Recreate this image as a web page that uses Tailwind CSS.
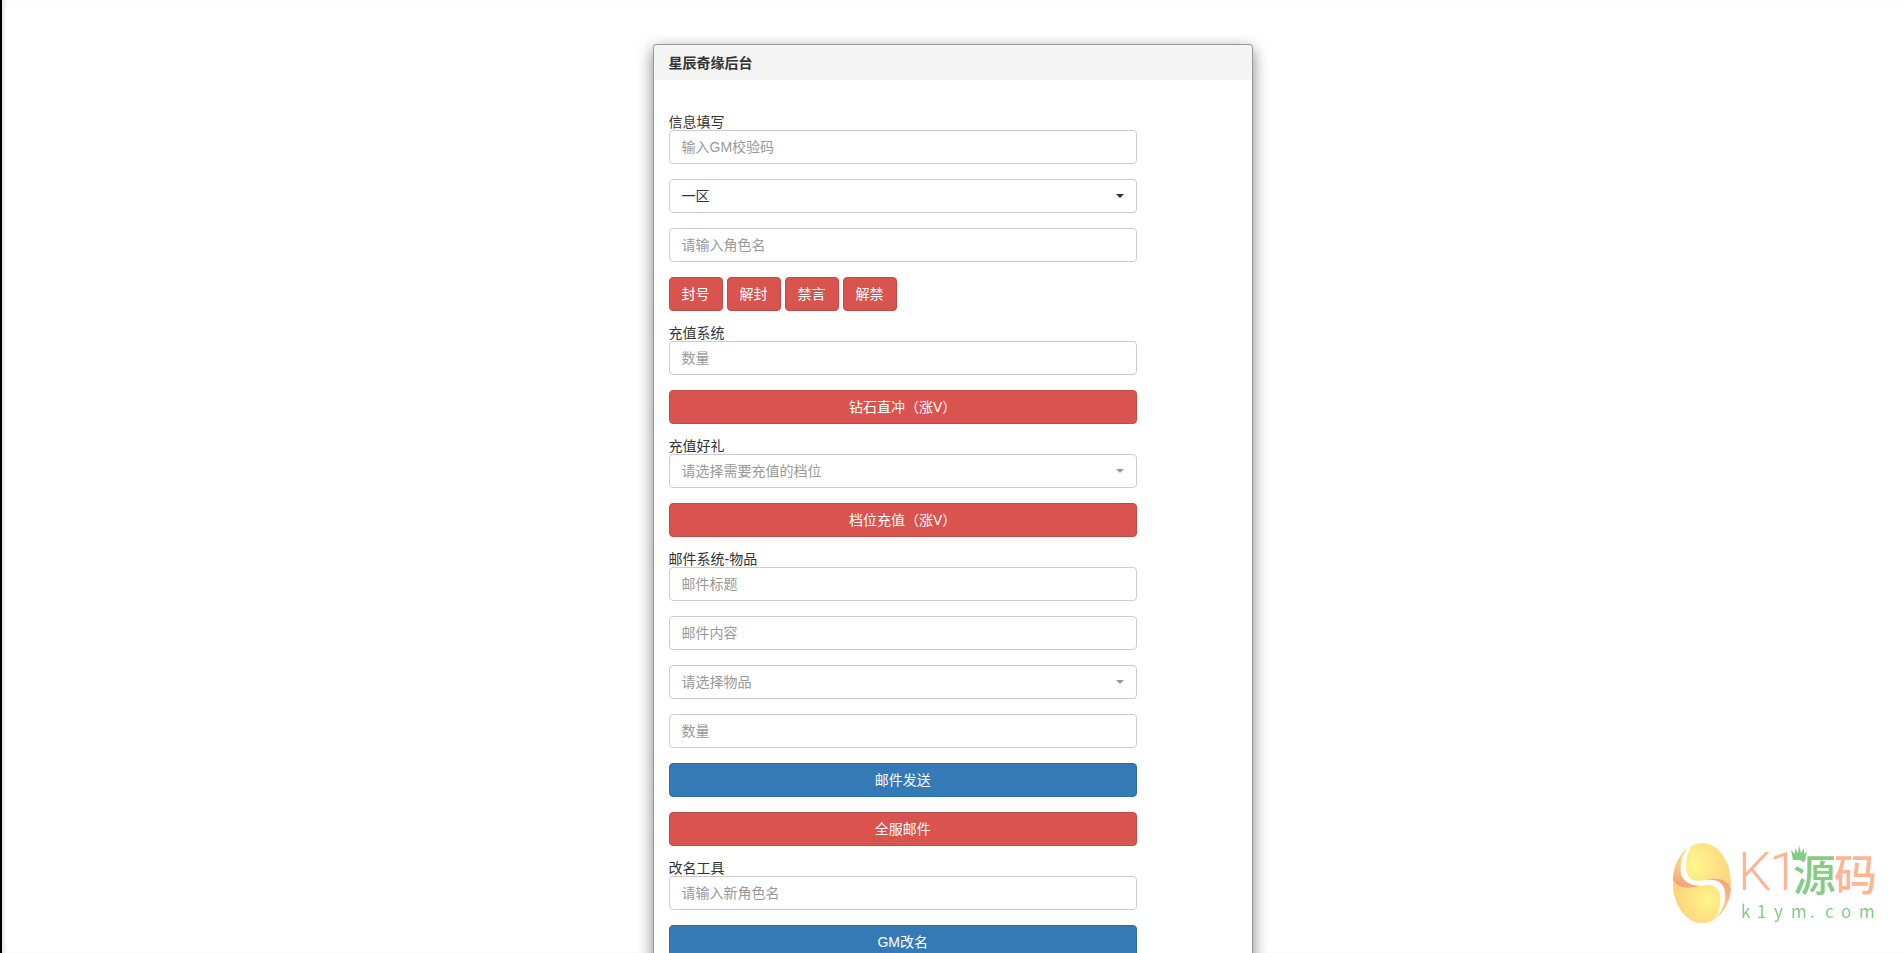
<!DOCTYPE html>
<html lang="zh-CN">
<head>
    <meta charset="UTF-8">
    <meta name="viewport" content="width=device-width, initial-scale=1.0">
    <title>星辰奇缘后台</title>
    <script src="https://cdn.jsdelivr.net/npm/@tailwindcss/browser@4"></script>
</head>
<body class="h-screen overflow-hidden bg-white border-l-2 border-black text-sm text-[#333] font-['Liberation_Sans','Noto_Sans_CJK_SC',sans-serif] shadow-[inset_4px_0_4px_-2px_rgba(0,0,0,0.12)]">

<main class="w-full max-w-[600px] mx-auto mt-11 pb-4 bg-white border border-black/40 rounded shadow-[0_5px_15px_rgba(0,0,0,0.5)]">
    <h1 class="h-[35px] px-[15px] leading-9 font-bold bg-[#f4f4f4] rounded-t">星辰奇缘后台</h1>

    <form class="w-10/12 px-[15px] pt-[35px] flex flex-col gap-[15px]">
        <!-- 信息填写 -->
        <div>
            <label for="checknum" class="block leading-[15px]">信息填写</label>
            <input id="checknum" type="password" placeholder="输入GM校验码" class="block w-full h-[34px] px-3 border border-[#ccc] rounded placeholder:text-[#999]">
        </div>
        <div class="relative">
            <select aria-label="选择区服" class="block w-full h-[34px] px-3 bg-white border border-[#ccc] rounded appearance-none">
                <option>一区</option>
            </select>
            <span class="absolute right-[13px] top-[15px] border-x-4 border-t-4 border-x-transparent border-t-[#333] pointer-events-none"></span>
        </div>
        <input type="text" aria-label="角色名" placeholder="请输入角色名" class="block w-full h-[34px] px-3 border border-[#ccc] rounded placeholder:text-[#999]">
        <div class="flex gap-1">
            <button type="button" class="h-[34px] px-3 text-white bg-[#d9534f] border border-[#c24a46] rounded">封号</button>
            <button type="button" class="h-[34px] px-3 text-white bg-[#d9534f] border border-[#c24a46] rounded">解封</button>
            <button type="button" class="h-[34px] px-3 text-white bg-[#d9534f] border border-[#c24a46] rounded">禁言</button>
            <button type="button" class="h-[34px] px-3 text-white bg-[#d9534f] border border-[#c24a46] rounded">解禁</button>
        </div>

        <!-- 充值系统 -->
        <div>
            <label for="chargenum" class="block leading-[15px]">充值系统</label>
            <input id="chargenum" type="text" placeholder="数量" class="block w-full h-[34px] px-3 border border-[#ccc] rounded placeholder:text-[#999]">
        </div>
        <button type="button" class="w-full h-[34px] px-3 text-white bg-[#d9534f] border border-[#c24a46] rounded">钻石直冲（涨V）</button>

        <!-- 充值好礼 -->
        <div>
            <label for="gift" class="block leading-[15px]">充值好礼</label>
            <div class="relative">
                <select id="gift" class="block w-full h-[34px] px-3 text-[#999] bg-white border border-[#ccc] rounded appearance-none">
                    <option>请选择需要充值的档位</option>
                </select>
                <span class="absolute right-[13px] top-[15px] border-x-4 border-t-4 border-x-transparent border-t-[#999] pointer-events-none"></span>
            </div>
        </div>
        <button type="button" class="w-full h-[34px] px-3 text-white bg-[#d9534f] border border-[#c24a46] rounded">档位充值（涨V）</button>

        <!-- 邮件系统 -->
        <div>
            <label for="mailtitle" class="block leading-[15px]">邮件系统-物品</label>
            <input id="mailtitle" type="text" placeholder="邮件标题" class="block w-full h-[34px] px-3 border border-[#ccc] rounded placeholder:text-[#999]">
        </div>
        <input type="text" aria-label="邮件内容" placeholder="邮件内容" class="block w-full h-[34px] px-3 border border-[#ccc] rounded placeholder:text-[#999]">
        <div class="relative">
            <select aria-label="物品" class="block w-full h-[34px] px-3 text-[#999] bg-white border border-[#ccc] rounded appearance-none">
                <option>请选择物品</option>
            </select>
            <span class="absolute right-[13px] top-[15px] border-x-4 border-t-4 border-x-transparent border-t-[#999] pointer-events-none"></span>
        </div>
        <input type="text" aria-label="数量" placeholder="数量" class="block w-full h-[34px] px-3 border border-[#ccc] rounded placeholder:text-[#999]">
        <button type="button" class="w-full h-[34px] px-3 text-white bg-[#337ab7] border border-[#2e6da4] rounded">邮件发送</button>
        <button type="button" class="w-full h-[34px] px-3 text-white bg-[#d9534f] border border-[#c24a46] rounded">全服邮件</button>

        <!-- 改名工具 -->
        <div>
            <label for="newname" class="block leading-[15px]">改名工具</label>
            <input id="newname" type="text" placeholder="请输入新角色名" class="block w-full h-[34px] px-3 border border-[#ccc] rounded placeholder:text-[#999]">
        </div>
        <button type="button" class="w-full h-[34px] px-3 text-white bg-[#337ab7] border border-[#2e6da4] rounded">GM改名</button>
    </form>
</main>

<!-- logo -->
<a href="#" aria-label="K1源码" class="fixed right-[27px] bottom-[25px]">
    <svg width="204" height="88" viewBox="0 0 204 88" class="overflow-visible">
        <defs>
            <radialGradient id="gold" gradientUnits="userSpaceOnUse" cx="22" cy="24" r="34">
                <stop offset="0" stop-color="#fff78c"/>
                <stop offset="1" stop-color="#fcd880"/>
            </radialGradient>
            <radialGradient id="goldBottom" gradientUnits="userSpaceOnUse" cx="36" cy="60" r="34">
                <stop offset="0" stop-color="#fff589"/>
                <stop offset="1" stop-color="#fcd27c"/>
            </radialGradient>
            <linearGradient id="leftWing" x1="0.6" y1="0" x2="0.4" y2="1">
                <stop offset="0" stop-color="#fce08a"/>
                <stop offset="0.6" stop-color="#fcc585"/>
                <stop offset="1" stop-color="#f0a07a"/>
            </linearGradient>
            <linearGradient id="rightWing" x1="0.5" y1="0" x2="0.4" y2="1">
                <stop offset="0" stop-color="#f2a47a"/>
                <stop offset="0.4" stop-color="#f8b583"/>
                <stop offset="1" stop-color="#fce08a"/>
            </linearGradient>
        </defs>
        <ellipse cx="30" cy="43" rx="29" ry="40" fill="url(#gold)"/>
        <path d="M1 42C8 49 18 48 28 45C40 42 50 48 50 58C49 68 46 77 40 81C37 82 34 83 30 83C14 83 1 65 1 42Z" fill="url(#goldBottom)"/>
        <path d="M18 6C7 13 1 27 1 40C6 48 16 49 27 46C18 44 10 38 10 27C10 19 13 12 18 6Z" fill="url(#leftWing)"/>
        <path d="M34 40C44 37 56 39 59 49C58 61 52 73 43 79C51 70 55 60 53 51C50 43 43 41 34 40Z" fill="url(#rightWing)"/>
        <path d="M18 6C9 13 6 31 11 38C17 47 27 46 35 45C47 45 50 55 48 65C47 71 45 76 41 80C50 73 54 62 53 53C52 42 44 39 36 40C28 41 21 42 17 37C11 29 14 15 20 5Z" fill="#fff"/>
        <text x="66 97" y="50" font-family="Roboto,sans-serif" font-weight="300" font-size="53" fill="#ffb593">K1</text>
        <text x="121" y="51" font-family="'Noto Sans CJK SC',sans-serif" font-weight="500" font-size="43" fill="#85cd85">源</text>
        <text x="162" y="51" font-family="'Noto Sans CJK SC',sans-serif" font-weight="500" font-size="43" fill="#ffb593">码</text>
        <path d="M121 20L119 10L123 14L123 8L126 13L127 5L129 13L132 8L132 14L135 11L133 20Z" fill="#85cd85"/>
        <text x="69 85 102 119 138 153 169 187" y="78" font-family="'Noto Sans CJK SC',sans-serif" font-size="17" fill="#85cd85">k1ym.com</text>
    </svg>
</a>

</body>
</html>
